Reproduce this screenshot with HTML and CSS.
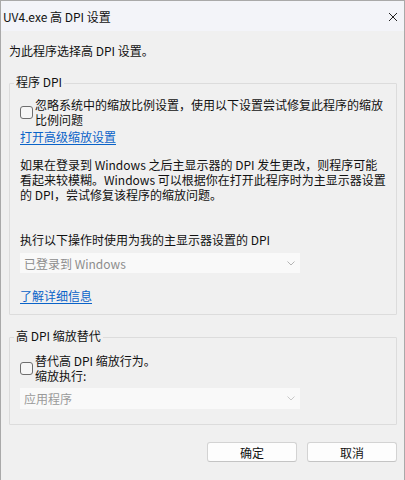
FILE: index.html
```html
<!DOCTYPE html>
<html lang="zh-CN">
<head>
<meta charset="utf-8">
<title>UV4.exe 高 DPI 设置</title>
<link rel="stylesheet" href="styles.css">
</head>
<body>
<div class="window">
  <div class="titlebar">
    <span class="title">UV4.exe 高 DPI 设置</span>
    <svg class="close" width="10" height="10" viewBox="0 0 10 10"><path d="M1 1 L9 9 M9 1 L1 9" stroke="#222" stroke-width="1" fill="none"/></svg>
  </div>
  <div class="content">
    <p class="intro">为此程序选择高 DPI 设置。</p>

    <section class="group g1">
      <div class="group-title">程序 DPI</div>
      <div class="check">
        <span class="box"></span>
        <span class="check-text">忽略系统中的缩放比例设置，使用以下设置尝试修复此程序的缩放<br>比例问题</span>
      </div>
      <a class="link link1" href="#">打开高级缩放设置</a>
      <p class="para">如果在登录到 Windows 之后主显示器的 DPI 发生更改，则程序可能<br>看起来较模糊。Windows 可以根据你在打开此程序时为主显示器设置<br>的 DPI，尝试修复该程序的缩放问题。</p>
      <p class="label">执行以下操作时使用为我的主显示器设置的 DPI</p>
      <div class="select s1">
        <span>已登录到 Windows</span>
        <svg width="8" height="5" viewBox="0 0 8 5"><path d="M0.5 0.5 L4 4 L7.5 0.5" stroke="#b4b4b4" stroke-width="1" fill="none"/></svg>
      </div>
      <a class="link link2" href="#">了解详细信息</a>
    </section>

    <section class="group g2">
      <div class="group-title">高 DPI 缩放替代</div>
      <div class="check check2">
        <span class="box"></span>
        <span class="check-text">替代高 DPI 缩放行为。<br>缩放执行:</span>
      </div>
      <div class="select s2">
        <span>应用程序</span>
        <svg width="8" height="5" viewBox="0 0 8 5"><path d="M0.5 0.5 L4 4 L7.5 0.5" stroke="#c8c8c8" stroke-width="1" fill="none"/></svg>
      </div>
    </section>

    <div class="buttons">
      <button class="btn">确定</button>
      <button class="btn">取消</button>
    </div>
  </div>
</div>
</body>
</html>
```
FILE: styles.css
```css
* { box-sizing: border-box; }
html, body { margin: 0; padding: 0; background: #f0f0f0; }
body {
  font-family: "Microsoft YaHei UI", "Segoe UI", "Noto Sans CJK SC", sans-serif;
  font-size: 12px;
  line-height: 15px;
  color: #111;
}
.window {
  width: 405px;
  height: 480px;
  border: 1px solid #a9a9a9;
  border-bottom: none;
  background: #f0f0f0;
  overflow: hidden;
}
.titlebar {
  height: 30px;
  background: #f3f4f9;
  display: flex;
  align-items: center;
  justify-content: space-between;
  padding: 0 6px 0 2px;
}
.title { font-size: 12px; color: #111; }
.close { display: block; margin-top: 2px; }
.content {
  padding: 0 7px 0 8px;
}
.intro { margin: 12px 0 0 0; }
.group {
  border: 1px solid #dcdcdc;
  border-radius: 1px;
  padding: 0 10px 11px 10px;
}
.g1 { margin-top: 25px; }
.g2 { margin-top: 22px; padding-bottom: 15px; }
.group-title {
  margin: -10px 0 0 -6px;
  padding: 0 2px;
  width: fit-content;
  background: #f0f0f0;
}
.check {
  display: flex;
  align-items: center;
  gap: 2px;
  margin-top: 8px;
}
.check2 { margin-top: 10px; }
.box {
  width: 13px;
  height: 13px;
  flex: none;
  border: 1px solid #6e6e6e;
  border-radius: 3px;
  background: #f6f6f6;
}
.check-text { white-space: nowrap; }
.link {
  display: block;
  width: fit-content;
  color: #0a63c8;
  text-decoration: underline;
  text-underline-offset: 2px;
}
.link1 { margin-top: 2px; }
.link2 { margin-top: 15px; }
.para { margin: 13px 0 0 0; white-space: nowrap; }
.label { margin: 30px 0 0 0; }
.select {
  width: 280px;
  height: 20px;
  background: #f9f9f9;
  display: flex;
  align-items: center;
  justify-content: space-between;
  padding: 0 5px 0 4px;
  color: #8d8d8d;
}
.s1 { margin-top: 6px; }
.s2 { margin-top: 5px; height: 21px; color: #9a9a9a; }
.buttons {
  display: flex;
  justify-content: flex-end;
  gap: 10px;
  margin-top: 17px;
}
.btn {
  width: 90px;
  height: 20px;
  background: #fdfdfd;
  border: 1px solid #d3d3d3;
  border-bottom-color: #c4c4c4;
  border-radius: 3px;
  font-family: inherit;
  font-size: 12px;
  line-height: 15px;
  color: #111;
  padding: 0;
}
```
